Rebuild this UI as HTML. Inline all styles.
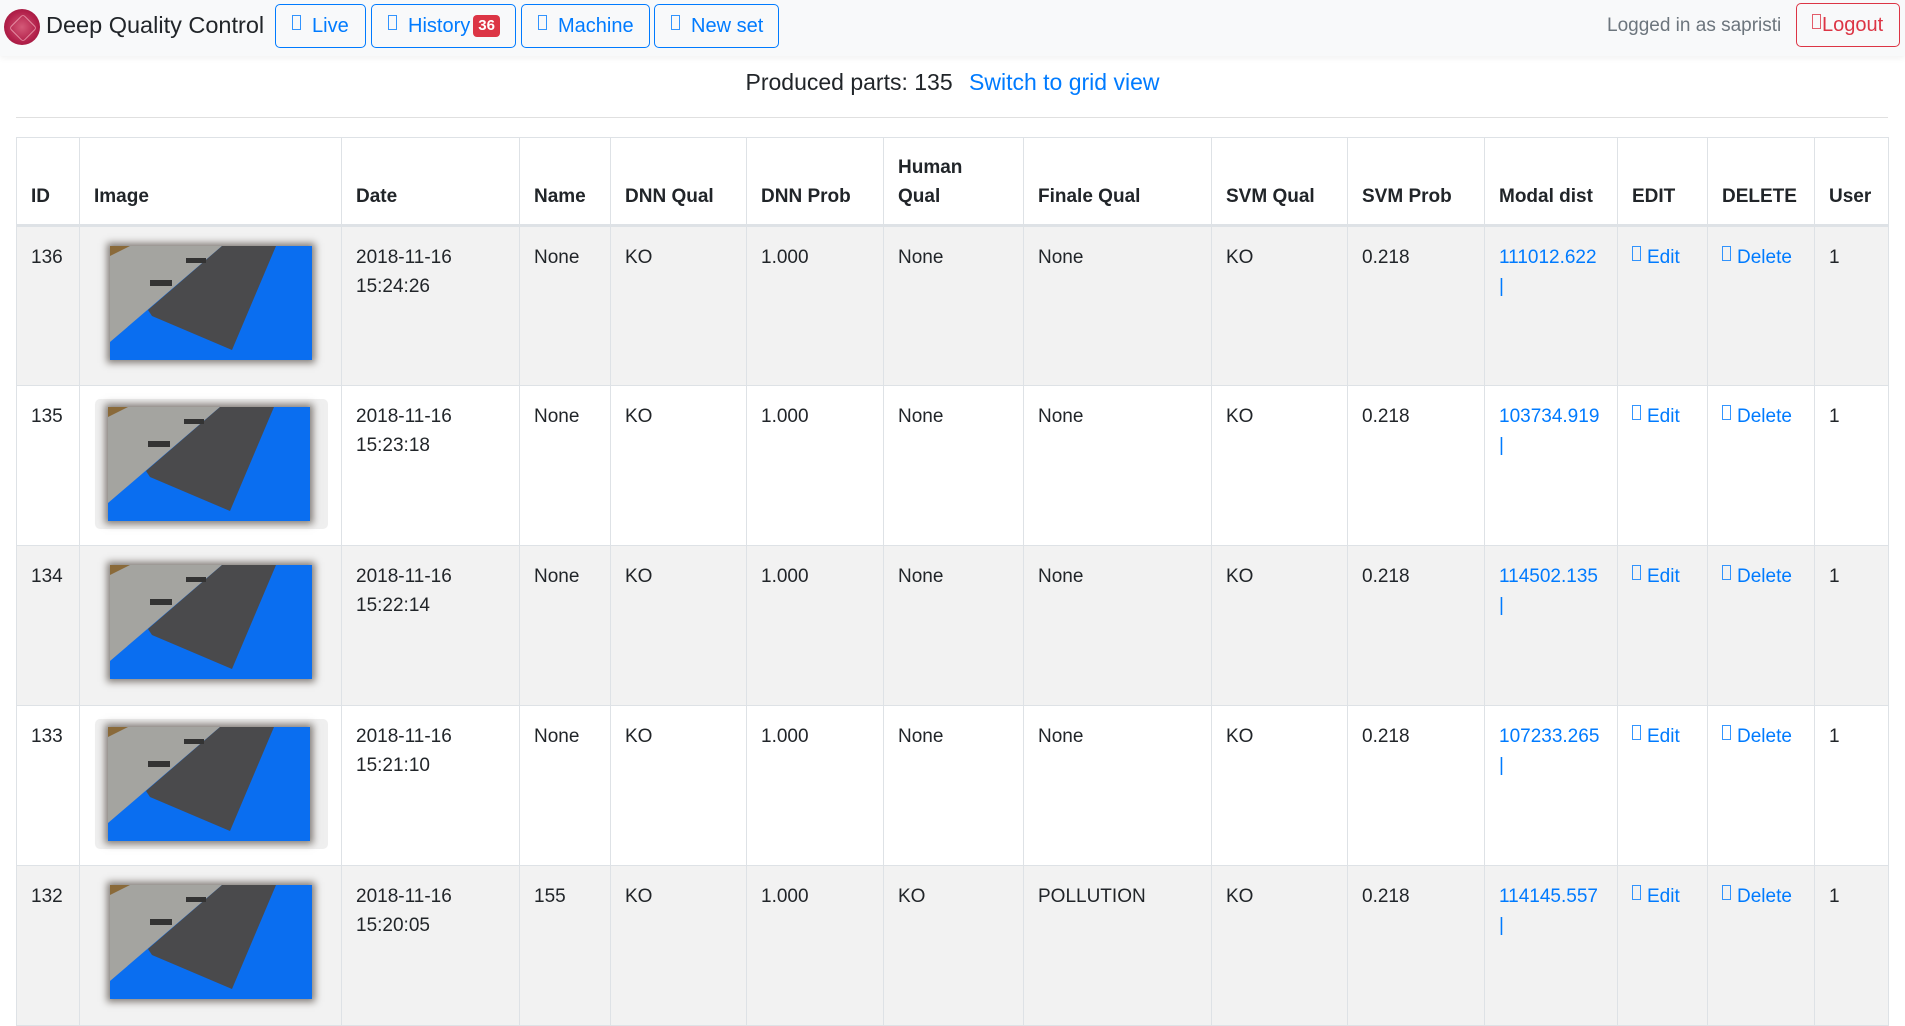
<!DOCTYPE html>
<html><head><meta charset="utf-8">
<style>
*{box-sizing:border-box;margin:0;padding:0}
body{width:1905px;height:941px;overflow:hidden;font-family:"Liberation Sans",sans-serif;font-size:19px;color:#212529;background:#fff;position:relative}
.nav{position:absolute;left:0;top:0;width:1905px;height:56px;background:#f8f9fa;box-shadow:0 2px 6px rgba(0,0,0,.06)}
.logo{position:absolute;left:4px;top:9px;width:36px;height:36px;border-radius:50%;background:radial-gradient(circle,#d45a78 0,#b2204a 60%,#8e1536 100%)}
.logo:after{content:"";position:absolute;left:9px;top:9px;width:18px;height:18px;border:1px solid rgba(255,200,210,.6);border-radius:3px;transform:rotate(45deg)}
.title{position:absolute;left:46px;top:12px;font-size:23.5px;color:#212529}
.btn{position:absolute;top:4px;height:44px;border:1px solid #007bff;border-radius:5px;color:#007bff;font-size:20px;line-height:42px;padding-left:16px}
.ic{display:inline-block;width:9px;height:15px;border:1px solid currentColor;vertical-align:2px;margin-right:11px;opacity:.8}
.badge{display:inline-block;background:#dc3545;color:#fff;font-size:15px;font-weight:bold;line-height:22px;padding:0 5px;border-radius:4px;vertical-align:2px;margin-left:3px}
.logged{position:absolute;left:1607px;top:15px;color:#6c757d;font-size:19px}
.logout{position:absolute;left:1796px;top:3px;width:104px;height:44px;border:1px solid #dc3545;border-radius:5px;color:#dc3545;line-height:42px;padding-left:15px;font-size:20px}
.prod{position:absolute;left:0;width:1905px;top:69px;text-align:center;font-size:23px}
.prod a{color:#007bff;margin-left:10px}
.hr{position:absolute;left:16px;top:117px;width:1872px;border-top:1px solid #e0e0e0}
table{position:absolute;left:16px;top:137px;border-collapse:collapse;table-layout:fixed;width:1872px}
td,th{border:1px solid #dee2e6;text-align:left;vertical-align:top;padding:14px 14px;line-height:29px}
th{vertical-align:bottom;font-weight:bold;height:88px;border-bottom:3px solid #dee2e6;padding-bottom:13px}
td{height:160px;padding-top:16px}
tr.o td{background:#f2f2f2}
.lnk{color:#007bff}
.img{display:block;width:202px;height:114px;box-shadow:0 0 7px 3px rgba(40,30,20,.55);margin:3px 0 0 16px}
.fr{background:#efefef;border-radius:5px;padding:8px 13px;width:233px;margin:-3px 0 0 1px}
.fr .img{margin:0}
</style></head><body>
<div class="nav">
<div class="logo"></div>
<div class="title">Deep Quality Control</div>
<div class="btn" style="left:275px;width:91px"><span class="ic"></span>Live</div>
<div class="btn" style="left:371px;width:145px"><span class="ic"></span>History<span class="badge">36</span></div>
<div class="btn" style="left:521px;width:129px"><span class="ic"></span>Machine</div>
<div class="btn" style="left:654px;width:125px"><span class="ic"></span>New set</div>
<div class="logged">Logged in as sapristi</div>
<div class="logout"><span class="ic" style="margin-right:1px"></span>Logout</div>
</div>
<div class="prod">Produced parts: 135 <a>Switch to grid view</a></div>
<div class="hr"></div>
<svg width="0" height="0" style="position:absolute"><defs><symbol id="p" viewBox="0 0 202 114"><rect width="202" height="114" fill="#0a6ef0"/><polygon points="0,0 112,0 0,96" fill="#a4a4a0"/><polygon points="0,0 20,0 0,10" fill="#8a6a3a"/><polygon points="112,0 166,0 122,104 42,70 38,64" fill="#4a4a4c"/><rect x="40" y="34" width="22" height="6" fill="#333"/><rect x="76" y="12" width="20" height="5" fill="#333"/></symbol></defs></svg>
<table>
<colgroup><col style="width:63px"><col style="width:262px"><col style="width:178px"><col style="width:91px"><col style="width:136px"><col style="width:137px"><col style="width:140px"><col style="width:188px"><col style="width:136px"><col style="width:137px"><col style="width:133px"><col style="width:90px"><col style="width:107px"><col style="width:74px"></colgroup>
<tr><th>ID</th><th>Image</th><th>Date</th><th>Name</th><th>DNN Qual</th><th>DNN Prob</th><th>Human Qual</th><th>Finale Qual</th><th>SVM Qual</th><th>SVM Prob</th><th>Modal dist</th><th>EDIT</th><th>DELETE</th><th>User</th></tr>
<tr class="o"><td>136</td><td><svg class="img"><use href="#p"/></svg></td><td>2018-11-16 15:24:26</td><td>None</td><td>KO</td><td>1.000</td><td>None</td><td>None</td><td>KO</td><td>0.218</td><td class="lnk">111012.622 |</td><td class="lnk"><span class="ic" style="margin-right:6px"></span>Edit</td><td class="lnk"><span class="ic" style="margin-right:6px"></span>Delete</td><td>1</td></tr>
<tr><td>135</td><td><div class="fr"><svg class="img"><use href="#p"/></svg></div></td><td>2018-11-16 15:23:18</td><td>None</td><td>KO</td><td>1.000</td><td>None</td><td>None</td><td>KO</td><td>0.218</td><td class="lnk">103734.919 |</td><td class="lnk"><span class="ic" style="margin-right:6px"></span>Edit</td><td class="lnk"><span class="ic" style="margin-right:6px"></span>Delete</td><td>1</td></tr>
<tr class="o"><td>134</td><td><svg class="img"><use href="#p"/></svg></td><td>2018-11-16 15:22:14</td><td>None</td><td>KO</td><td>1.000</td><td>None</td><td>None</td><td>KO</td><td>0.218</td><td class="lnk">114502.135 |</td><td class="lnk"><span class="ic" style="margin-right:6px"></span>Edit</td><td class="lnk"><span class="ic" style="margin-right:6px"></span>Delete</td><td>1</td></tr>
<tr><td>133</td><td><div class="fr"><svg class="img"><use href="#p"/></svg></div></td><td>2018-11-16 15:21:10</td><td>None</td><td>KO</td><td>1.000</td><td>None</td><td>None</td><td>KO</td><td>0.218</td><td class="lnk">107233.265 |</td><td class="lnk"><span class="ic" style="margin-right:6px"></span>Edit</td><td class="lnk"><span class="ic" style="margin-right:6px"></span>Delete</td><td>1</td></tr>
<tr class="o"><td>132</td><td><svg class="img"><use href="#p"/></svg></td><td>2018-11-16 15:20:05</td><td>155</td><td>KO</td><td>1.000</td><td>KO</td><td>POLLUTION</td><td>KO</td><td>0.218</td><td class="lnk">114145.557 |</td><td class="lnk"><span class="ic" style="margin-right:6px"></span>Edit</td><td class="lnk"><span class="ic" style="margin-right:6px"></span>Delete</td><td>1</td></tr>
</table>
</body></html>
